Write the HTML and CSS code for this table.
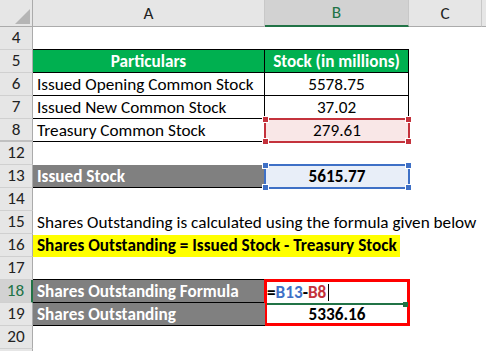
FILE: index.html
```html
<!DOCTYPE html>
<html>
<head>
<meta charset="utf-8">
<link rel="stylesheet" href="styles.css">
</head>
<body>
<div class="sheet">
  <div class="corner"><div class="tri"></div></div>
  <div class="ch">A</div>
  <div class="ch sel">B</div>
  <div class="ch">C</div>
  <div class="ch end"></div>

  <div class="rh">4</div>
  <div class="c bb"></div><div class="c bb"></div><div class="c"></div><div class="c"></div>

  <div class="rh">5</div>
  <div class="c green center bold br bb">Particulars</div>
  <div class="c green center bold br bb">Stock (in millions)</div>
  <div class="c"></div><div class="c"></div>

  <div class="rh">6</div>
  <div class="c br bb">Issued Opening Common Stock</div>
  <div class="c center br bb">5578.75</div>
  <div class="c"></div><div class="c"></div>

  <div class="rh">7</div>
  <div class="c br bb">Issued New Common Stock</div>
  <div class="c center br bb">37.02</div>
  <div class="c"></div><div class="c"></div>

  <div class="rh hid">8</div>
  <div class="c br bb">Treasury Common Stock</div>
  <div class="c center hl red"><span class="hlbox"><i class="k tl"></i><i class="k tr"></i><i class="k bl"></i><i class="k br2"></i></span><span class="tx">279.61</span></div>
  <div class="c"></div><div class="c"></div>

  <div class="rh">12</div>
  <div class="c"></div><div class="c"></div><div class="c"></div><div class="c"></div>

  <div class="rh">13</div>
  <div class="c gray bold bb">Issued Stock</div>
  <div class="c center bold hl blue"><span class="hlbox"><i class="k tl"></i><i class="k tr"></i><i class="k bl"></i><i class="k br2"></i></span><span class="tx">5615.77</span></div>
  <div class="c"></div><div class="c"></div>

  <div class="rh">14</div>
  <div class="c"></div><div class="c"></div><div class="c"></div><div class="c"></div>

  <div class="rh">15</div>
  <div class="c span3">Shares Outstanding is calculated using the formula given below</div>
  <div class="c"></div>

  <div class="rh">16</div>
  <div class="c span3"><span class="yellow bold">Shares Outstanding = Issued Stock - Treasury Stock</span></div>
  <div class="c"></div>

  <div class="rh">17</div>
  <div class="c bb"></div><div class="c"></div><div class="c"></div><div class="c"></div>

  <div class="rh sel">18</div>
  <div class="c gray bold bb">Shares Outstanding Formula</div>
  <div class="redbox">
    <div class="rb-cell formula bold">=<span class="ref-b">B13</span>-<span class="ref-r">B8</span><span class="caret"></span><i class="gline"></i></div>
    <div class="rb-cell center bold">5336.16</div>
  </div>
  <div class="c"></div><div class="c"></div>

  <div class="rh">19</div>
  <div class="c gray bold bb">Shares Outstanding</div>
  <div class="c"></div><div class="c"></div>

  <div class="rh">20</div>
  <div class="c"></div><div class="c"></div><div class="c"></div><div class="c"></div>

  <div class="rh"></div>
  <div class="c"></div><div class="c"></div><div class="c"></div><div class="c"></div>
</div>
</body>
</html>
```
FILE: styles.css
```css
html, body {
  margin: 0;
  padding: 0;
  background: #ffffff;
}
body {
  font-family: Carlito, Calibri, Lato, "Liberation Sans", sans-serif;
  font-size: 17.2px;
  color: #000;
}
.sheet {
  display: grid;
  grid-template-columns: 33px 232px 144px 73px 4px;
  grid-template-rows: 27px repeat(14, 23px) 23px;
  width: 486px;
  height: 351px;
  overflow: hidden;
}
.corner {
  background: #e6e6e6;
  border-right: 1px solid #ababab;
  border-bottom: 1px solid #ababab;
  box-sizing: border-box;
  position: relative;
}
.tri {
  position: absolute;
  left: 15px;
  top: 9px;
  width: 0;
  height: 0;
  border-left: 15px solid transparent;
  border-bottom: 15px solid #b5b5b5;
}
.ch {
  background: #e6e6e6;
  border-right: 1px solid #c8c8c8;
  border-bottom: 1px solid #ababab;
  box-sizing: border-box;
  display: flex;
  align-items: center;
  justify-content: center;
  color: #222;
  line-height: 1;
  padding-top: 1px;
}
.ch.sel {
  background: #d2d2d2;
  color: #217346;
  border-bottom: 2px solid #217346;
}
.ch.end {
  border-right: none;
}
.rh {
  background: #e6e6e6;
  border-right: 1px solid #ababab;
  border-bottom: 1px solid #d0d0d0;
  box-sizing: border-box;
  display: flex;
  align-items: center;
  justify-content: center;
  color: #222;
  line-height: 1;
}
.rh.hid {
  border-bottom: 2px solid #c0c0c0;
}
.rh.sel {
  background: #d2d2d2;
  color: #217346;
  border-right: 2px solid #217346;
}
.c {
  box-sizing: border-box;
  line-height: 22px;
  padding: 1px 0 0 4px;
  white-space: nowrap;
  overflow: visible;
  position: relative;
}
.center {
  text-align: center;
  padding-left: 0;
}
.bold { font-weight: bold; }
.br { border-right: 1px solid #000; }
.bb { border-bottom: 1px solid #000; }
.green {
  background: #00b050;
  color: #fff;
}
.gray {
  background: #808080;
  color: #fff;
}
.span3 {
  grid-column: span 3;
}
.yellow {
  background: #ffff00;
  display: inline-block;
  margin-left: -4px;
  padding: 0 3px 0 4px;
  line-height: 22px;
}
.hl .tx { position: relative; }
.hlbox {
  position: absolute;
  left: -1px;
  top: -1px;
  right: -1px;
  bottom: -1px;
  border: 2px solid;
}
.red .hlbox {
  border-color: #c4323c;
  background: #f9e7e7;
}
.blue .hlbox {
  border-color: #3e70c6;
  background: #e8eef8;
}
.k {
  position: absolute;
  width: 5px;
  height: 5px;
  background: inherit;
  border: 1px solid #fff;
}
.red .k { background: #c4323c; }
.blue .k { background: #3e70c6; }
.k.tl { left: -4px; top: -4px; }
.k.tr { right: -4px; top: -4px; }
.k.bl { left: -4px; bottom: -4px; }
.k.br2 { right: -4px; bottom: -4px; }
.redbox {
  grid-row: span 2;
  display: grid;
  grid-template-rows: 23px 23px;
  position: relative;
  box-sizing: border-box;
  margin: -1px -1px 0 -1px;
  border: 3px solid #ff0000;
}
.rb-cell {
  line-height: 20px;
  white-space: nowrap;
  position: relative;
}
.formula {
  padding-left: 0;
  border-bottom: 2px solid #217346;
  display: flex;
  align-items: center;
}
.ref-b { color: #3e70c6; }
.ref-r { color: #c4323c; }
.caret {
  display: inline-block;
  width: 1px;
  height: 17px;
  background: #000;
  margin-left: 2px;
}
.gline {
  position: absolute;
  right: -1px;
  bottom: -4px;
  width: 5px;
  height: 5px;
  background: #217346;
}
```
